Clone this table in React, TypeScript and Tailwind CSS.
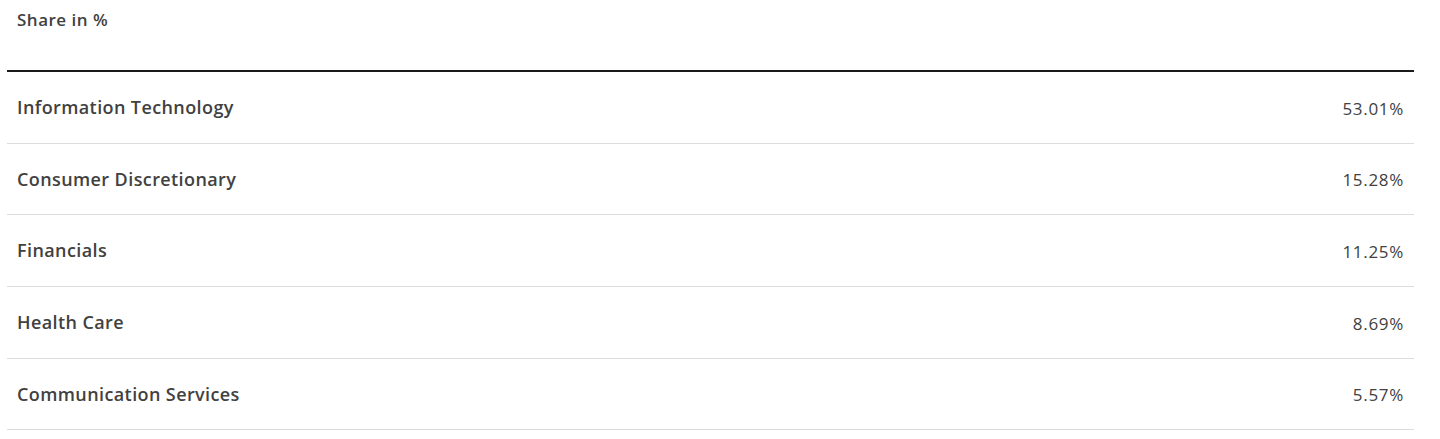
const rows = [
  { label: 'Information Technology', value: '53.01%' },
  { label: 'Consumer Discretionary', value: '15.28%' },
  { label: 'Financials', value: '11.25%' },
  { label: 'Health Care', value: '8.69%' },
  { label: 'Communication Services', value: '5.57%' },
]

export default function App() {
  return (
    <div className="w-[1440px] h-[439px] bg-white font-['Open_Sans',sans-serif] text-[#414141]">
      <div className="ml-[7px] w-[1407px]">
        {/* Header */}
        <div className="h-[72px] border-b-2 border-[#1a1a1a] px-[10px] pt-[7px]">
          <span className="text-[17px] font-semibold tracking-[0.5px]">Share in %</span>
        </div>

        {/* Rows */}
        {rows.map((row) => (
          <div
            key={row.label}
            className="h-[71.7px] border-b border-[#dcdcdc] flex items-center justify-between px-[10px]"
          >
            <span className="text-[18px] font-semibold tracking-[0.4px]">{row.label}</span>
            <span className="text-[17px] tracking-[0.7px] pt-[2px]">{row.value}</span>
          </div>
        ))}
      </div>
    </div>
  )
}
